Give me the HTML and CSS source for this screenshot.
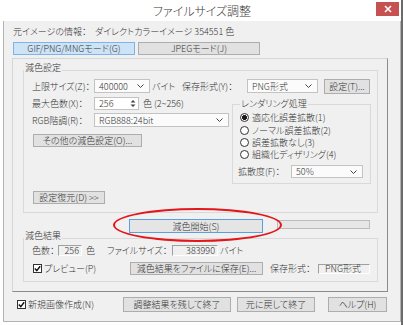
FILE: index.html
```html
<!DOCTYPE html>
<html lang="ja">
<head>
    <meta charset="UTF-8">
    <title>ファイルサイズ調整</title>
    <link rel="stylesheet" href="styles.css">
</head>
<body>
    <div class="window">
        <div class="titlebar">
            <span></span>
            <span class="title">ファイルサイズ調整</span>
            <span class="close">
                <svg width="8" height="8" viewBox="0 0 8 8"><path d="M1 1L7 7M7 1L1 7" stroke="#fff" stroke-width="1.6"/></svg>
            </span>
        </div>
        <div class="client">
            <div class="info">
                <span class="info-label">元イメージの情報：</span>
                <span>ダイレクトカラーイメージ 354551 色</span>
            </div>
            <div class="tabs">
                <button class="btn tab active">GIF/PNG/MNGモード(G)</button>
                <button class="btn tab">JPEGモード(J)</button>
            </div>

            <div class="panel">
                <fieldset class="group reduce">
                    <legend>減色設定</legend>
                    <div class="row row-size">
                        <span class="lbl">上限サイズ(Z)：</span>
                        <span class="combo w-size">400000<svg class="arrow" width="7" height="4"><polyline points="0.5,0.5 3.5,3.5 6.5,0.5" fill="none" stroke="#444"/></svg></span>
                        <span class="unit">バイト</span>
                        <span class="lbl-fmt">保存形式(Y)：</span>
                        <span class="combo w-fmt">PNG形式<svg class="arrow" width="7" height="4"><polyline points="0.5,0.5 3.5,3.5 6.5,0.5" fill="none" stroke="#444"/></svg></span>
                        <button class="btn btn-set">設定(T)...</button>
                    </div>
                    <div class="split">
                        <div class="left">
                            <div class="row row-colors">
                                <span class="lbl">最大色数(X)：</span>
                                <span class="spin">256<svg width="6" height="9"><path d="M0.5 3.5L3 1L5.5 3.5Z M0.5 5.5L3 8L5.5 5.5Z" fill="#444"/></svg></span>
                                <span class="range">色 (2~256)</span>
                            </div>
                            <div class="row row-rgb">
                                <span class="lbl">RGB階調(R)：</span>
                                <span class="combo w-rgb">RGB888:24bit<svg class="arrow" width="7" height="4"><polyline points="0.5,0.5 3.5,3.5 6.5,0.5" fill="none" stroke="#444"/></svg></span>
                            </div>
                            <button class="btn btn-other">その他の減色設定(O)...</button>
                            <button class="btn btn-restore">設定復元(D) &gt;&gt;</button>
                        </div>
                        <fieldset class="group render">
                            <legend>レンダリング処理</legend>
                            <label class="radio first"><span class="dot on"></span>適応化誤差拡散(1)</label>
                            <label class="radio"><span class="dot"></span>ノーマル誤差拡散(2)</label>
                            <label class="radio"><span class="dot"></span>誤差拡散なし(3)</label>
                            <label class="radio"><span class="dot"></span>組織化ディザリング(4)</label>
                            <div class="row row-spread">
                                <span class="lbl-spread">拡散度(F)：</span>
                                <span class="combo w-spread">50%<svg class="arrow" width="7" height="4"><polyline points="0.5,0.5 3.5,3.5 6.5,0.5" fill="none" stroke="#444"/></svg></span>
                            </div>
                        </fieldset>
                    </div>
                </fieldset>

                <div class="run-row">
                    <button class="btn btn-run">減色開始(S)</button>
                    <div class="progress"></div>
                </div>

                <fieldset class="group result">
                    <legend>減色結果</legend>
                    <div class="row row-count">
                        <span class="lbl-count">色数：</span>
                        <span class="field w-count">256</span>
                        <span class="lbl-color">色</span>
                        <span class="lbl-filesize">ファイルサイズ：</span>
                        <span class="field w-bytes">383990</span>
                        <span class="unit">バイト</span>
                    </div>
                    <div class="row row-save">
                        <label class="check w-preview"><span class="box"><svg width="7" height="7"><polyline points="0.8,3.6 2.8,5.6 6.2,1.2" fill="none" stroke="#111" stroke-width="1.4"/></svg></span>プレビュー(P)</label>
                        <button class="btn btn-save">減色結果をファイルに保存(E)...</button>
                        <span class="lbl-savefmt">保存形式：</span>
                        <span class="field w-savefmt">PNG形式</span>
                    </div>
                </fieldset>
            </div>

            <div class="footer">
                <label class="check w-new"><span class="box"><svg width="7" height="7"><polyline points="0.8,3.6 2.8,5.6 6.2,1.2" fill="none" stroke="#111" stroke-width="1.4"/></svg></span>新規画像作成(N)</label>
                <button class="btn btn-keep">調整結果を残して終了</button>
                <button class="btn btn-revert">元に戻して終了</button>
                <button class="btn btn-help">ヘルプ(H)</button>
            </div>
        </div>
        <div class="mark"></div>
    </div>
</body>
</html>
```

FILE: styles.css
```css
* {
    box-sizing: border-box;
    font-feature-settings: "palt";
}
body {
    margin: 0;
    width: 403px;
    height: 325px;
    overflow: hidden;
    background: linear-gradient(to right, #fff 401px, #6b6b6b 401px);
    font-family: "Noto Sans CJK JP", "Noto Sans", sans-serif;
    font-size: 9px;
    font-weight: 300;
    color: #333;
}
.window {
    position: relative;
    margin-left: 3px;
    width: 398px;
    height: 322px;
    background: #f0f0f0;
    border: 1px solid #b4b4b4;
    border-top: none;
}
.titlebar {
    height: 21px;
    margin: 0 -1px;
    background: #fff;
    display: grid;
    grid-template-columns: 1fr auto 1fr;
    align-items: center;
}
.title {
    font-size: 12px;
    color: #3a3a3a;
}
.close {
    justify-self: end;
    align-self: start;
    margin: 2px 2px 0 0;
    width: 23px;
    height: 14px;
    background: #c75050;
    display: flex;
    align-items: center;
    justify-content: center;
}
.client {
    padding-left: 8px;
}
.info {
    display: flex;
    height: 12px;
    margin-top: 5px;
    padding-left: 1px;
    line-height: 12px;
}
.info-label {
    width: 82px;
}
.tabs {
    display: flex;
    gap: 3px;
    margin-top: 4px;
    padding-left: 1px;
}
.btn {
    font: inherit;
    color: inherit;
    background: #e1e1e1;
    border: 1px solid #adadad;
    padding: 0;
    line-height: 1;
    display: flex;
    align-items: center;
    justify-content: center;
}
.tab {
    width: 122px;
    height: 13px;
}
.tab.active {
    background: #cde4f7;
    border-color: #7eb4ea;
}
.panel {
    margin-top: 3px;
    width: 376px;
    height: 234px;
    border: 1px solid;
    border-color: #d6d6d6 #8c8c8c #8c8c8c #d6d6d6;
}
.group {
    margin: 0;
    padding: 0;
    min-width: 0;
    border: 1px solid #d9d9d9;
}
.group legend {
    padding: 0 1px 4px;
    line-height: 12px;
}
.row {
    display: flex;
    align-items: center;
}
.lbl {
    width: 62px;
}
.combo {
    display: flex;
    align-items: center;
    justify-content: space-between;
    height: 100%;
    padding: 0 5px 0 4px;
    background: #fbfbfb;
    border: 1px solid #c3c3c3;
}
.reduce {
    margin: 3px 0 0 10px;
    width: 355px;
    padding-bottom: 8px;
}
.row-size {
    height: 14px;
    margin-top: 1px;
    padding-left: 8px;
}
.w-size { width: 56px; }
.unit {
    margin-left: 2px;
    width: 30px;
}
.lbl-fmt { width: 65px; }
.w-fmt { width: 71px; }
.btn-set {
    margin-left: 6px;
    width: 46px;
    height: 15px;
}
.split {
    display: flex;
    align-items: flex-start;
}
.left {
    width: 208px;
    padding-left: 8px;
}
.row-colors {
    height: 13px;
    margin-top: 4px;
}
.spin {
    display: flex;
    align-items: center;
    justify-content: space-between;
    width: 45px;
    height: 100%;
    padding: 0 2px 0 4px;
    background: #fff;
    border: 1px solid #c3c3c3;
}
.range { margin-left: 4px; }
.row-rgb {
    height: 14px;
    margin-top: 3px;
}
.w-rgb { width: 135px; }
.btn-other {
    margin: 7px 0 0 1px;
    width: 109px;
    height: 13px;
}
.btn-restore {
    margin: 44px 0 0 1px;
    width: 72px;
    height: 13px;
}
.render {
    margin-top: 5px;
    width: 139px;
    padding: 0 0 5px 7px;
}
.render legend {
    padding-bottom: 0;
}
.radio {
    display: flex;
    align-items: center;
    height: 12px;
}
.radio.first { height: 14px; }
.dot {
    width: 9px;
    height: 9px;
    margin-right: 3px;
    border: 1px solid #333;
    border-radius: 50%;
    background: #fff;
}
.dot.on {
    background: radial-gradient(circle, #1a1a1a 2.2px, #fff 2.8px);
}
.row-spread {
    height: 13px;
    margin: 5px 0 0 -2px;
}
.lbl-spread { width: 53px; }
.w-spread { width: 72px; }
.run-row {
    display: flex;
    align-items: flex-start;
    margin-top: 6px;
    height: 14px;
}
.btn-run {
    margin-left: 116px;
    width: 134px;
    height: 14px;
    background: #e5e5e5;
    border-color: #5a9fe0;
}
.progress {
    margin: 1px 0 0 14px;
    width: 93px;
    height: 9px;
    background: #e6e6e6;
    border: 1px solid #bcbcbc;
}
.result {
    margin: -2px 0 0 10px;
    width: 355px;
    padding-bottom: 6px;
}
.result legend {
    line-height: 10px;
}
.row-count {
    height: 11px;
    padding-left: 8px;
}
.field {
    height: 100%;
    background: #f0f0f0;
    border: 1px solid;
    border-color: #a0a0a0 #fff #fff #a0a0a0;
    display: flex;
    align-items: center;
    justify-content: flex-end;
    padding-right: 2px;
}
.lbl-count { width: 26px; }
.w-count { width: 24px; }
.lbl-color {
    margin-left: 4px;
    width: 21px;
}
.lbl-filesize { width: 65px; }
.w-bytes { width: 46px; }
.row-save {
    height: 13px;
    margin-top: 6px;
    padding-left: 9px;
}
.check {
    display: flex;
    align-items: center;
}
.box {
    width: 9px;
    height: 9px;
    margin-right: 2px;
    border: 1px solid #333;
    background: #fff;
    display: flex;
    align-items: center;
    justify-content: center;
}
.w-preview { width: 97px; }
.btn-save {
    width: 133px;
    height: 13px;
}
.lbl-savefmt {
    margin-left: 7px;
    width: 48px;
}
.w-savefmt {
    width: 52px;
    height: 10px;
    justify-content: center;
}
.footer {
    display: flex;
    align-items: center;
    margin-top: 5px;
    padding-left: 5px;
    height: 15px;
}
.w-new { width: 106px; }
.btn-keep {
    width: 108px;
    height: 15px;
}
.btn-revert {
    margin-left: 6px;
    width: 78px;
    height: 15px;
}
.btn-help {
    margin-left: 13px;
    width: 59px;
    height: 15px;
}
.mark {
    position: absolute;
    left: 109px;
    top: 208px;
    width: 169px;
    height: 34px;
    border: 2px solid #e3161c;
    border-radius: 50%;
    pointer-events: none;
}
```
